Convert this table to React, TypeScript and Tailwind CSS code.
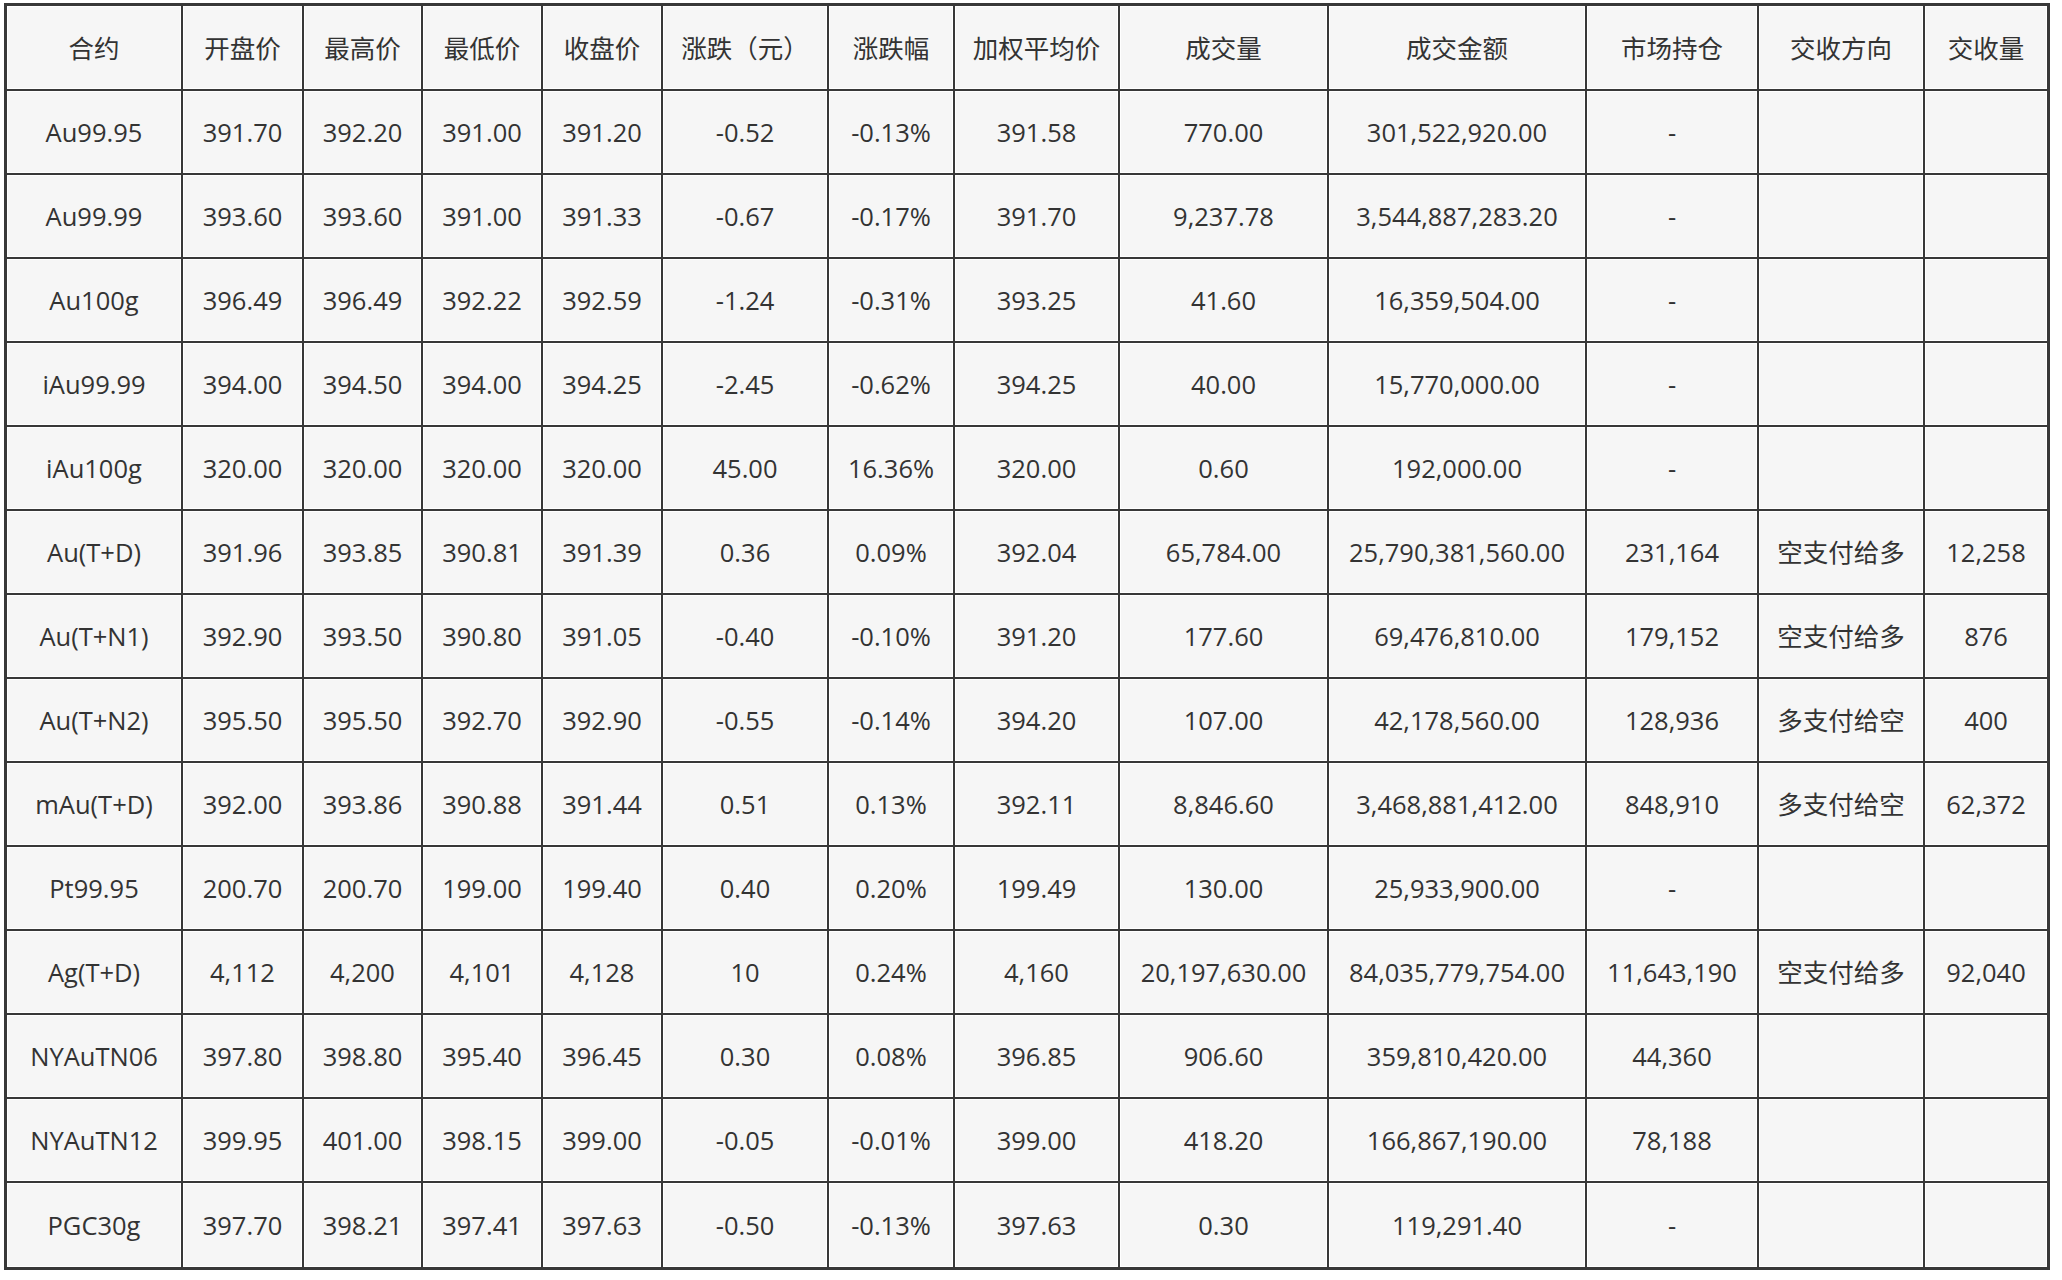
import React from "react";

const headers = [
  "合约",
  "开盘价",
  "最高价",
  "最低价",
  "收盘价",
  "涨跌（元）",
  "涨跌幅",
  "加权平均价",
  "成交量",
  "成交金额",
  "市场持仓",
  "交收方向",
  "交收量",
];

const widths = [
  "w-[176px]",
  "w-[121px]",
  "w-[119px]",
  "w-[120px]",
  "w-[120px]",
  "w-[166px]",
  "w-[126px]",
  "w-[165px]",
  "w-[209px]",
  "w-[258px]",
  "w-[172px]",
  "w-[166px]",
  "w-[122px]",
];

const rows: string[][] = [
  ["Au99.95", "391.70", "392.20", "391.00", "391.20", "-0.52", "-0.13%", "391.58", "770.00", "301,522,920.00", "-", "", ""],
  ["Au99.99", "393.60", "393.60", "391.00", "391.33", "-0.67", "-0.17%", "391.70", "9,237.78", "3,544,887,283.20", "-", "", ""],
  ["Au100g", "396.49", "396.49", "392.22", "392.59", "-1.24", "-0.31%", "393.25", "41.60", "16,359,504.00", "-", "", ""],
  ["iAu99.99", "394.00", "394.50", "394.00", "394.25", "-2.45", "-0.62%", "394.25", "40.00", "15,770,000.00", "-", "", ""],
  ["iAu100g", "320.00", "320.00", "320.00", "320.00", "45.00", "16.36%", "320.00", "0.60", "192,000.00", "-", "", ""],
  ["Au(T+D)", "391.96", "393.85", "390.81", "391.39", "0.36", "0.09%", "392.04", "65,784.00", "25,790,381,560.00", "231,164", "空支付给多", "12,258"],
  ["Au(T+N1)", "392.90", "393.50", "390.80", "391.05", "-0.40", "-0.10%", "391.20", "177.60", "69,476,810.00", "179,152", "空支付给多", "876"],
  ["Au(T+N2)", "395.50", "395.50", "392.70", "392.90", "-0.55", "-0.14%", "394.20", "107.00", "42,178,560.00", "128,936", "多支付给空", "400"],
  ["mAu(T+D)", "392.00", "393.86", "390.88", "391.44", "0.51", "0.13%", "392.11", "8,846.60", "3,468,881,412.00", "848,910", "多支付给空", "62,372"],
  ["Pt99.95", "200.70", "200.70", "199.00", "199.40", "0.40", "0.20%", "199.49", "130.00", "25,933,900.00", "-", "", ""],
  ["Ag(T+D)", "4,112", "4,200", "4,101", "4,128", "10", "0.24%", "4,160", "20,197,630.00", "84,035,779,754.00", "11,643,190", "空支付给多", "92,040"],
  ["NYAuTN06", "397.80", "398.80", "395.40", "396.45", "0.30", "0.08%", "396.85", "906.60", "359,810,420.00", "44,360", "", ""],
  ["NYAuTN12", "399.95", "401.00", "398.15", "399.00", "-0.05", "-0.01%", "399.00", "418.20", "166,867,190.00", "78,188", "", ""],
  ["PGC30g", "397.70", "398.21", "397.41", "397.63", "-0.50", "-0.13%", "397.63", "0.30", "119,291.40", "-", "", ""],
];

function cellClass(col: number, lastRow: boolean) {
  return `${widths[col]} p-0 text-center align-middle bg-[#f6f6f6] shadow-[inset_0_0_0_1px_#ffffff] border-[#383838] ${
    col < 12 ? "border-r-2" : ""
  } ${lastRow ? "" : "border-b-2"}`;
}

function App() {
  return (
    <div className="min-h-screen bg-white pt-[3px] pl-[4px]">
      <table
        className="table-fixed border-separate border-spacing-0 border-[3px] border-[#383838] w-[2046px] text-[25.5px] text-[#333333] font-normal"
        style={{ fontFamily: '"Open Sans", "Noto Sans CJK SC", sans-serif' }}
      >
        <thead>
          <tr className="h-[85px]">
            {headers.map((h, i) => (
              <th key={h} className={`${cellClass(i, false)} font-normal pt-[2px]`}>
                {h}
              </th>
            ))}
          </tr>
        </thead>
        <tbody>
          {rows.map((row, r) => (
            <tr key={row[0]} className="h-[84px]">
              {row.map((v, i) => (
                <td key={i} className={cellClass(i, r === rows.length - 1)}>
                  {v}
                </td>
              ))}
            </tr>
          ))}
        </tbody>
      </table>
    </div>
  );
}

export default App;
